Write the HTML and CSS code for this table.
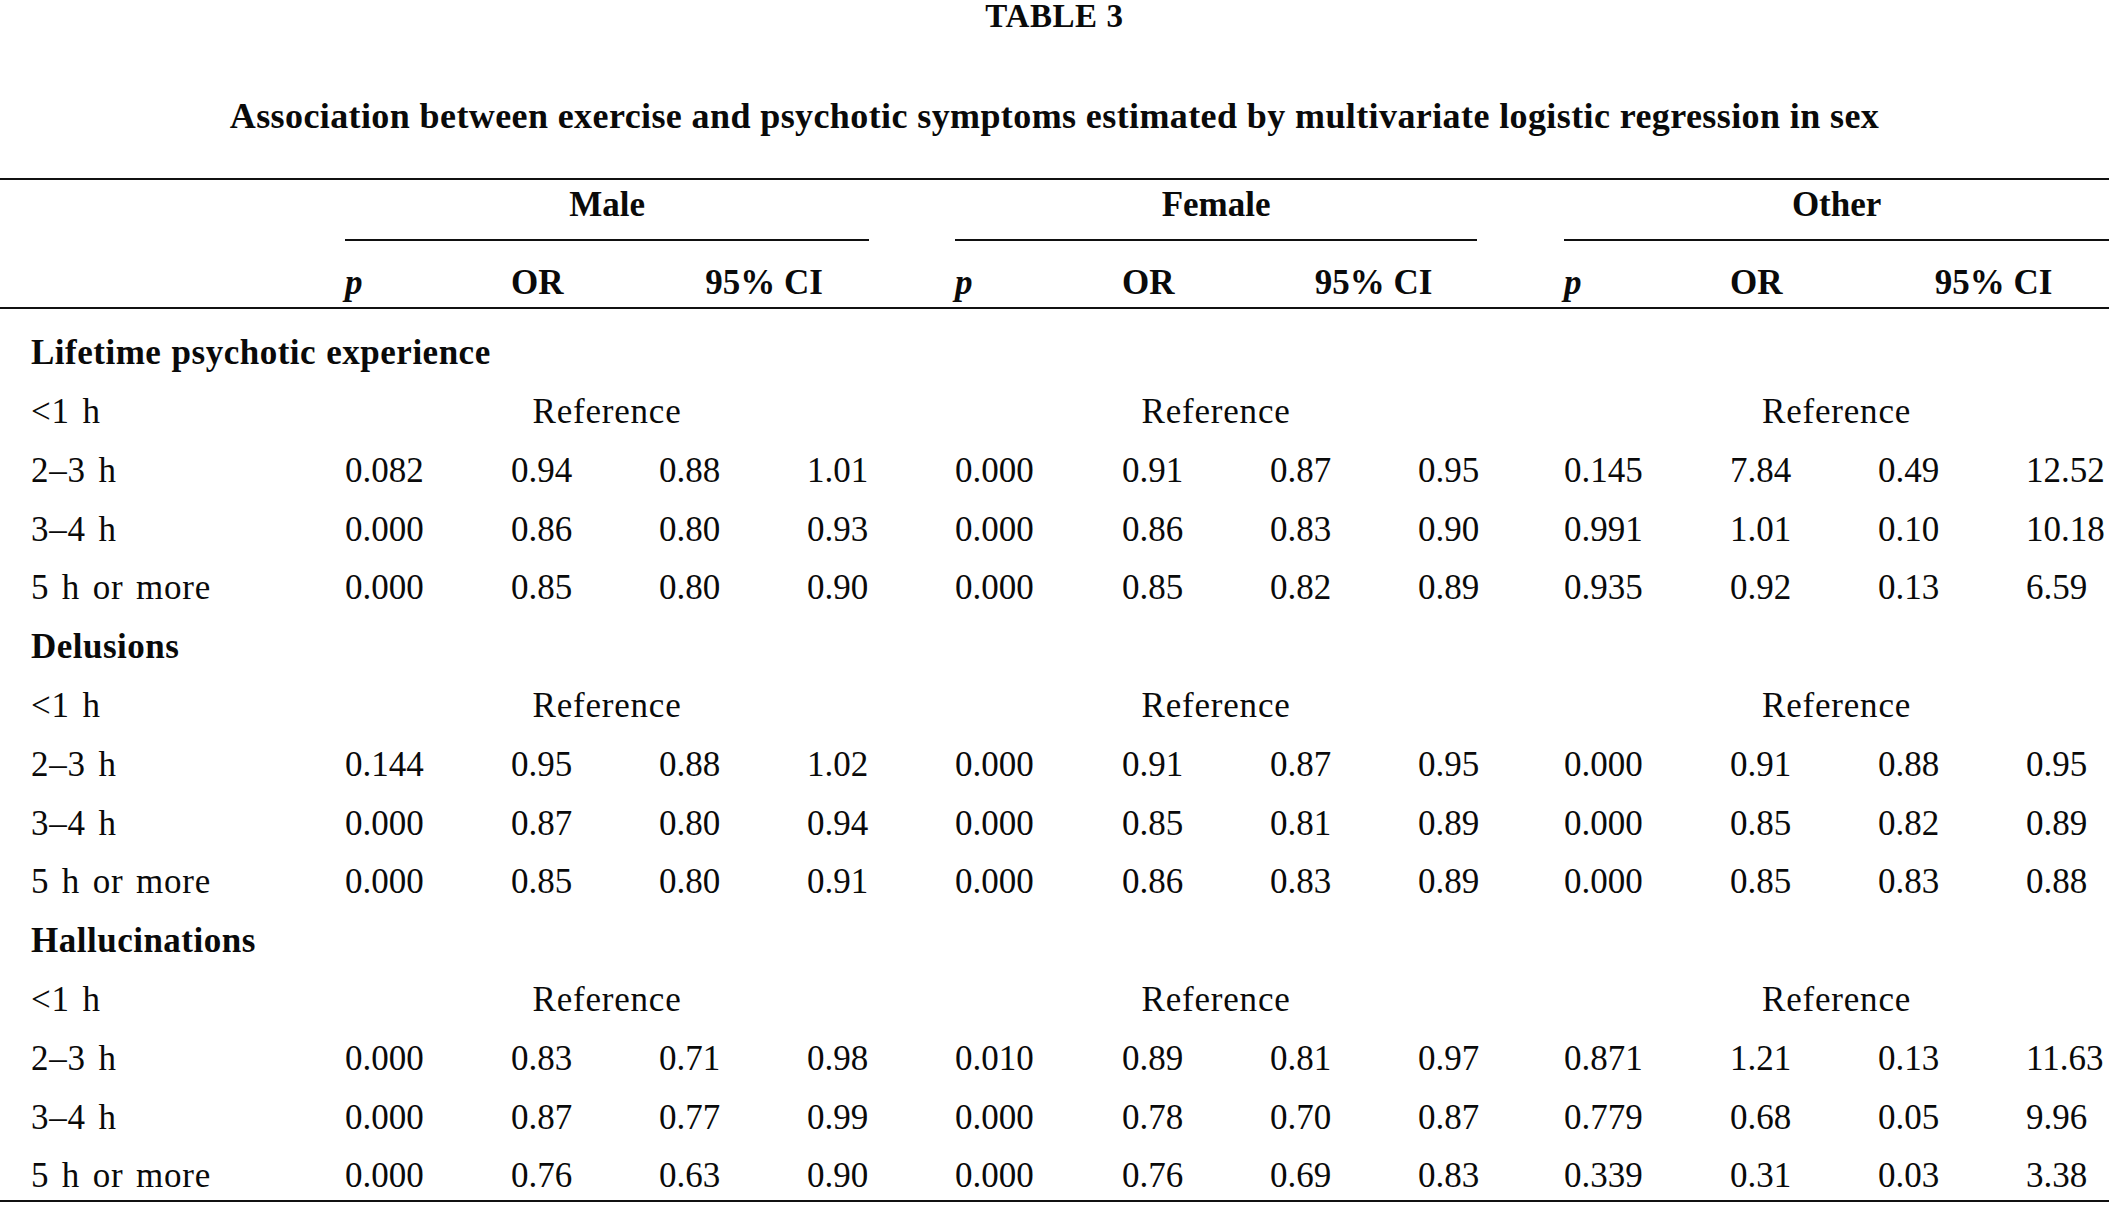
FILE: index.html
```html
<!DOCTYPE html>
<html lang="en">
<head>
<meta charset="utf-8">
<title>Table 3</title>
<link rel="stylesheet" href="styles.css">
</head>
<body>
<div class="page">
  <div class="caption">TABLE 3</div>
  <div class="title">Association between exercise and psychotic symptoms estimated by multivariate logistic regression in sex</div>
  <table class="tbl">
    <colgroup>
      <col class="c-lab">
      <col class="c-p"><col class="c-n"><col class="c-n"><col class="c-n">
      <col class="c-p2"><col class="c-n"><col class="c-n"><col class="c-n2">
      <col class="c-p"><col class="c-n"><col class="c-n"><col class="c-last">
    </colgroup>
    <thead>
      <tr class="grp">
        <th></th>
        <th colspan="4" class="g"><div class="gl">Male</div></th>
        <th colspan="4" class="g g2"><div class="gl">Female</div></th>
        <th colspan="4" class="g g3"><div class="gl">Other</div></th>
      </tr>
      <tr class="sub">
        <th></th>
        <th class="pi">p</th><th>OR</th><th colspan="2" class="ci">95% CI</th>
        <th class="pi">p</th><th>OR</th><th colspan="2" class="ci ci2">95% CI</th>
        <th class="pi">p</th><th>OR</th><th colspan="2" class="ci ci3">95% CI</th>
      </tr>
    </thead>
    <tbody>
      <tr class="sec first"><td colspan="13">Lifetime psychotic experience</td></tr>
      <tr><td class="lab">&lt;1 h</td><td colspan="4" class="ref">Reference</td><td colspan="4" class="ref ref2">Reference</td><td colspan="4" class="ref ref3">Reference</td></tr>
      <tr><td class="lab">2–3 h</td><td>0.082</td><td>0.94</td><td>0.88</td><td>1.01</td><td>0.000</td><td>0.91</td><td>0.87</td><td>0.95</td><td>0.145</td><td>7.84</td><td>0.49</td><td>12.52</td></tr>
      <tr><td class="lab">3–4 h</td><td>0.000</td><td>0.86</td><td>0.80</td><td>0.93</td><td>0.000</td><td>0.86</td><td>0.83</td><td>0.90</td><td>0.991</td><td>1.01</td><td>0.10</td><td>10.18</td></tr>
      <tr><td class="lab">5 h or more</td><td>0.000</td><td>0.85</td><td>0.80</td><td>0.90</td><td>0.000</td><td>0.85</td><td>0.82</td><td>0.89</td><td>0.935</td><td>0.92</td><td>0.13</td><td>6.59</td></tr>
      <tr class="sec"><td colspan="13">Delusions</td></tr>
      <tr><td class="lab">&lt;1 h</td><td colspan="4" class="ref">Reference</td><td colspan="4" class="ref ref2">Reference</td><td colspan="4" class="ref ref3">Reference</td></tr>
      <tr><td class="lab">2–3 h</td><td>0.144</td><td>0.95</td><td>0.88</td><td>1.02</td><td>0.000</td><td>0.91</td><td>0.87</td><td>0.95</td><td>0.000</td><td>0.91</td><td>0.88</td><td>0.95</td></tr>
      <tr><td class="lab">3–4 h</td><td>0.000</td><td>0.87</td><td>0.80</td><td>0.94</td><td>0.000</td><td>0.85</td><td>0.81</td><td>0.89</td><td>0.000</td><td>0.85</td><td>0.82</td><td>0.89</td></tr>
      <tr><td class="lab">5 h or more</td><td>0.000</td><td>0.85</td><td>0.80</td><td>0.91</td><td>0.000</td><td>0.86</td><td>0.83</td><td>0.89</td><td>0.000</td><td>0.85</td><td>0.83</td><td>0.88</td></tr>
      <tr class="sec"><td colspan="13">Hallucinations</td></tr>
      <tr><td class="lab">&lt;1 h</td><td colspan="4" class="ref">Reference</td><td colspan="4" class="ref ref2">Reference</td><td colspan="4" class="ref ref3">Reference</td></tr>
      <tr><td class="lab">2–3 h</td><td>0.000</td><td>0.83</td><td>0.71</td><td>0.98</td><td>0.010</td><td>0.89</td><td>0.81</td><td>0.97</td><td>0.871</td><td>1.21</td><td>0.13</td><td>11.63</td></tr>
      <tr><td class="lab">3–4 h</td><td>0.000</td><td>0.87</td><td>0.77</td><td>0.99</td><td>0.000</td><td>0.78</td><td>0.70</td><td>0.87</td><td>0.779</td><td>0.68</td><td>0.05</td><td>9.96</td></tr>
      <tr class="last"><td class="lab">5 h or more</td><td>0.000</td><td>0.76</td><td>0.63</td><td>0.90</td><td>0.000</td><td>0.76</td><td>0.69</td><td>0.83</td><td>0.339</td><td>0.31</td><td>0.03</td><td>3.38</td></tr>
    </tbody>
  </table>
</div>
</body>
</html>
```

FILE: styles.css
```css
html, body {
  margin: 0;
  padding: 0;
  background: #ffffff;
}

.page {
  width: 2109px;
  color: #0a0a0a;
  font-family: "Liberation Serif", "Times New Roman", serif;
}

.caption {
  font-size: 33px;
  line-height: 33px;
  font-weight: bold;
  text-align: center;
  letter-spacing: 0.6px;
}

.title {
  margin-top: 65px;
  font-size: 36px;
  line-height: 36px;
  font-weight: bold;
  text-align: center;
  letter-spacing: 0.4px;
}

.tbl {
  margin-top: 44px;
  width: 2109px;
  table-layout: fixed;
  border-collapse: separate;
  border-spacing: 0;
  font-size: 35px;
}

.c-lab { width: 345px; }
.c-p { width: 166px; }
.c-p2 { width: 167px; }
.c-n { width: 148px; }
.c-n2 { width: 146px; }
.c-last { width: 83px; }

.tbl th,
.tbl td {
  padding: 0;
  text-align: left;
  white-space: nowrap;
  vertical-align: top;
}

/* group header row */
.grp th {
  border-top: 2px solid #111;
  padding-top: 5.8px;
  font-weight: bold;
  line-height: 38.7px;
}

.grp th.g {
  padding-right: 86px;
  text-align: center;
}

.grp th.g2 { padding-right: 87px; }
.grp th.g3 { padding-right: 0; }

.gl {
  padding-bottom: 14.5px;
  border-bottom: 2px solid #111;
}

/* sub header row */
.sub th {
  padding-top: 22.8px;
  padding-bottom: 4.5px;
  border-bottom: 2px solid #111;
  font-weight: bold;
  line-height: 38.7px;
}

.sub th.pi { font-style: italic; }

.sub th.ci {
  padding-right: 86px;
  text-align: center;
}
.sub th.ci2 { padding-right: 87px; }
.sub th.ci3 { padding-right: 0; }

/* body */
.tbl tbody td {
  padding-top: 11px;
  line-height: 47.8px;
}

.tbl tbody tr.first td { padding-top: 20.2px; }

.tbl tbody td.lab,
.sec td {
  padding-left: 31px;
}

.lab,
.ref {
  letter-spacing: 0.8px;
  word-spacing: 3px;
}

.sec td {
  font-weight: bold;
  letter-spacing: 0.5px;
  word-spacing: 1px;
}

.tbl tbody td.ref {
  padding-right: 86px;
  text-align: center;
}
.tbl tbody td.ref2 { padding-right: 87px; }
.tbl tbody td.ref3 { padding-right: 0; }

.last td {
  border-bottom: 2px solid #111;
}
```
